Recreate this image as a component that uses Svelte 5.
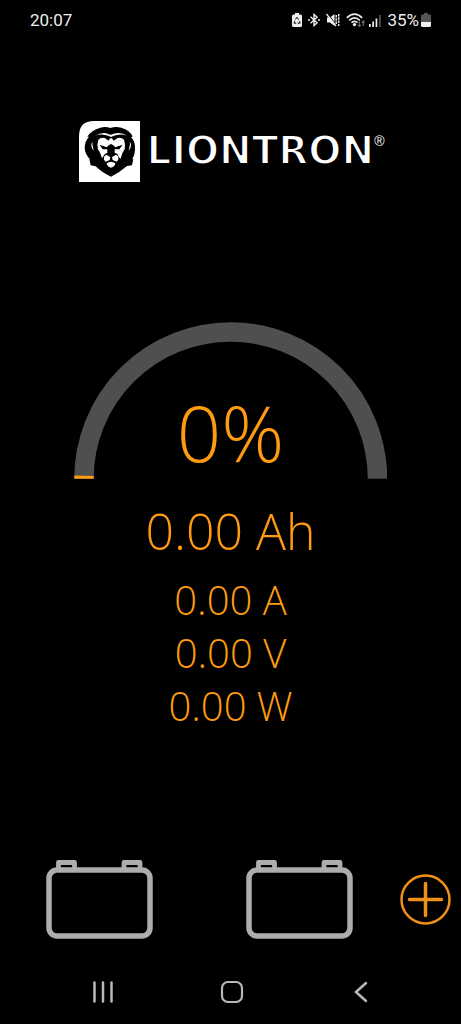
<script>
  const charge = 0;
  const readings = ['0.00 A', '0.00 V', '0.00 W'];
  const batteries = ['Battery 1', 'Battery 2'];
  const arcLength = Math.PI * 147;
  const filled = Math.max(3, (arcLength * charge) / 100);
</script>

<div class="screen">
  <header class="status">
    <time>20:07</time>
    <div class="indicators">
      <svg width="10" height="14" viewBox="0 0 10 14" aria-hidden="true">
        <path fill="#eee" d="M3 0h4v1.500h1.500Q10 1.500 10 3v9.500Q10 14 8.500 14h-7Q0 14 0 12.500V3Q0 1.500 1.500 1.500H3z" />
        <path fill="none" stroke="#111" stroke-width="1" d="M3.300 6.600L5 4.200l1.700 2.400M7.500 8l.6 2.200H5.600M4.200 10.200H2L2.800 8" />
      </svg>
      <svg width="12" height="14" viewBox="0 0 12 14" aria-hidden="true">
        <path fill="none" stroke="#eee" stroke-width="1.400" d="M2.500 3.800l6.600 6L6 12.600V1.400l3.100 2.800-6.600 6" />
        <path fill="#eee" d="M0 6.200h2v1.600H0zM10 6.200h2v1.600h-2z" />
      </svg>
      <svg width="14" height="14" viewBox="0 0 14 14" aria-hidden="true">
        <path fill="#eee" d="M1 4.500h3L8.500 1v12L4 9.500H1z" />
        <path stroke="#000" stroke-width="1" d="M2 1l8.500 11" />
        <path stroke="#eee" stroke-width="1.300" d="M.5 1l9.500 12" />
        <path fill="none" stroke="#eee" stroke-width="1.500" stroke-dasharray="2.500 .8" d="M10.200 2v10M12.700 1v12" />
      </svg>
      <svg class="wifi" width="20" height="14" viewBox="0 0 20 14" aria-hidden="true">
        <g fill="none" stroke="#eee" stroke-width="1.700">
          <path d="M.8 4.800Q8.500-2.600 16.200 4.800M3.200 7.300q5.300-4.800 10.600 0M5.500 9.600q3-2.600 6 0" />
        </g>
        <circle cx="8.500" cy="11.600" r="1.700" fill="#eee" />
        <path fill="none" stroke="#666" stroke-width="1.200" d="M13.400 8.500v5M11.900 11.800l1.500 1.700 1.500-1.700M17.300 13V8M15.800 9.700L17.300 8l1.500 1.700" />
      </svg>
      <svg width="12" height="13" viewBox="0 0 12 13" aria-hidden="true">
        <path fill="#eee" d="M0 10h1.700v3H0zM3.300 7.500H5V13H3.300zM6.600 4.500h1.700V13H6.600z" />
        <path fill="#555" d="M10 1h1.700v12H10z" />
      </svg>
      <span class="level">35%</span>
      <svg width="10" height="14" viewBox="0 0 10 14" aria-hidden="true">
        <path fill="#555" d="M3 0h4v1.500h2q1 0 1 1V9H0V2.500q0-1 1-1h2z" />
        <path fill="#eee" d="M0 9h10v3.500Q10 14 8.500 14h-7Q0 14 0 12.500z" />
      </svg>
    </div>
  </header>

  <div class="brand">
    <svg width="61" height="61" viewBox="27 30 183 183" aria-hidden="true">
      <path fill="#fff" d="M72 30h138v183H27V75Q27 30 72 30z" />
      <path fill="#000" d="M52 77Q64 57 91 50Q108 46 121 51Q135 46 154 50Q180 57 188 77L183 78Q197 93 195 117Q194 133 187 145L190 144L186 163L171 165Q148 185 123 197Q96 185 77 166L62 163L58 144L61 146Q45 130 44 111Q44 91 57 77z" />
      <g fill="#fff">
        <path d="M74 74Q98 62 113 68Q118 71 123 71Q132 66 146 66Q160 66 171 74Q158 70 146 71Q133 72 123 78Q113 72 100 71Q86 70 74 74z" />
        <path d="M85 86Q93 78 104 81L116 89L119 83L123 81L127 83L131 89L143 81Q154 78 162 86Q167 101 164 115Q155 126 152 143L146 138L142 129L134 125L134 115L148 115L158 101L136 109L130 103L123 99L116 103L110 109L89 101L98 115L112 115L112 125L104 130L96 142Q92 126 84 115Q80 101 85 86z" />
        <path d="M109 131L121 138L119 147L107 152Q99 147 103 136zM138 131L126 138L128 147L140 152Q148 147 144 136z" />
        <path d="M110 157Q123 148 136 157Q135 167 123 170Q111 167 110 157z" />
        <path d="M68 92Q65 99 69 109L71 119Q64 112 64 103Q64 96 68 92zM179 92Q182 99 178 109L176 119Q183 112 183 103Q183 96 179 92z" />
      </g>
      <path fill="#000" d="M111 127Q123 124 135 127L132 133L123 139L114 133z" />
    </svg>
    <span class="wordmark">LIONTRON</span><span class="mark">®</span>
  </div>

  <main>
    <div class="gauge">
      <svg viewBox="0 0 314 157" aria-hidden="true">
        <path d="M10 157A147 147 0 0 1 304 157" fill="none" stroke="#4f4f4f" stroke-width="19.500" />
        <path d="M10 157A147 147 0 0 1 304 157" fill="none" stroke="#ff9b10" stroke-width="19.500" stroke-dasharray="{filled} 1000" />
      </svg>
      <strong class="percent">{charge}%</strong>
    </div>
    <p class="capacity">0.00 Ah</p>
    {#each readings as reading}
      <p class="reading">{reading}</p>
    {/each}
  </main>

  <section class="batteries">
    {#each batteries as name}
      <button class="battery" aria-label={name}>
        <svg width="108" height="80" viewBox="0 0 108 80" aria-hidden="true">
          <g fill="none" stroke="#adadad">
            <rect x="3" y="11" width="101" height="66" rx="8" stroke-width="5.500" />
            <path stroke-width="4.800" stroke-linejoin="round" d="M12.500 10V3.500h16V10M78 10V3.500h16V10" />
          </g>
        </svg>
      </button>
    {/each}
    <button class="add" aria-label="Add battery">
      <svg width="51" height="51" viewBox="0 0 51 51" aria-hidden="true">
        <circle cx="25.500" cy="25.500" r="24" fill="none" stroke="#f09018" stroke-width="2.500" />
        <path d="M25.500 9.500v32M9.500 25.500h32" stroke="#f09018" stroke-width="3.500" stroke-linecap="round" />
      </svg>
    </button>
  </section>

  <nav>
    <button aria-label="Recent apps">
      <svg width="22" height="22" viewBox="0 0 22 22" aria-hidden="true">
        <path d="M2.500 1.500v19M11 1.500v19M19.500 1.500v19" stroke="#b8b8b8" stroke-width="2.500" stroke-linecap="round" />
      </svg>
    </button>
    <button aria-label="Home">
      <svg width="24" height="24" viewBox="0 0 24 24" aria-hidden="true">
        <rect x="2" y="2" width="20" height="20" rx="6" fill="none" stroke="#b8b8b8" stroke-width="2.200" />
      </svg>
    </button>
    <button aria-label="Back">
      <svg width="22" height="22" viewBox="0 0 22 22" aria-hidden="true">
        <path d="M16 2L6 11l10 9" fill="none" stroke="#b8b8b8" stroke-width="2.500" stroke-linecap="round" />
      </svg>
    </button>
  </nav>
</div>

<style>
  :global(body) {
    margin: 0;
    background: #000;
  }
  .screen {
    min-height: 100vh;
    display: flex;
    flex-direction: column;
    background: #000;
    color: #ff9b10;
    font-family: 'Open Sans', sans-serif;
    font-weight: 300;
  }
  svg {
    display: block;
  }
  button {
    display: flex;
    align-items: center;
    justify-content: center;
    padding: 0;
    border: 0;
    background: none;
  }
  .status {
    display: flex;
    align-items: center;
    justify-content: space-between;
    height: 40px;
    padding: 0 30px;
    color: #eee;
    font: 400 17px/40px Roboto, sans-serif;
  }
  .indicators {
    display: flex;
    align-items: center;
    gap: 6px;
  }
  .wifi {
    margin-right: -3px;
  }
  .level {
    margin-right: -4px;
  }
  .brand {
    display: flex;
    align-items: center;
    justify-content: center;
    height: 62px;
    margin-top: 80px;
    padding-left: 2px;
    color: #fff;
  }
  .wordmark {
    margin-left: 7px;
    font: 700 39px/56px 'DejaVu Sans', sans-serif;
    -webkit-text-stroke: 2px #000;
  }
  .mark {
    align-self: flex-start;
    margin-top: 12px;
    font: 400 14px/18px 'Liberation Sans', sans-serif;
  }
  main {
    display: flex;
    flex-direction: column;
    align-items: center;
    margin-top: 140px;
  }
  .gauge {
    display: grid;
    width: 68%;
    align-items: end;
    justify-items: center;
  }
  .gauge > * {
    grid-area: 1 / 1;
  }
  .gauge svg {
    width: 100%;
  }
  .percent {
    font-size: 78px;
    font-weight: 300;
    line-height: 94px;
  }
  p {
    margin: 0;
  }
  .capacity {
    margin-top: 18px;
    font-size: 50px;
    line-height: 68px;
  }
  .reading {
    font-size: 40px;
    line-height: 53px;
  }
  .capacity + .reading {
    margin-top: 8px;
  }
  .batteries {
    display: flex;
    align-items: center;
    margin-top: auto;
    padding-right: 10px;
  }
  .battery {
    flex: 1;
  }
  nav {
    display: flex;
    margin-top: 21px;
    padding: 0 36px 0 38px;
    height: 64px;
  }
  nav button {
    flex: 1;
  }
</style>
